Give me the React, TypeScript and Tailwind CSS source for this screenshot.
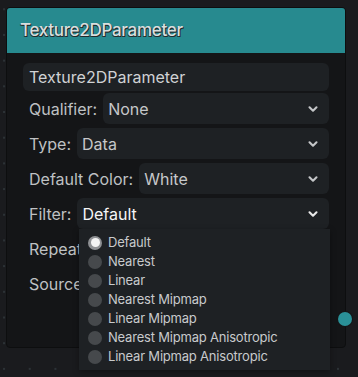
import React from 'react';
import { ChevronDown } from 'lucide-react';

const FILTERS = [
  'Default',
  'Nearest',
  'Linear',
  'Nearest Mipmap',
  'Linear Mipmap',
  'Nearest Mipmap Anisotropic',
  'Linear Mipmap Anisotropic',
];

const SelectRow = ({ label, value, active }: { label: string; value: string; active?: boolean }) => (
  <div className="flex items-center h-[31px] gap-[6px] pl-[6px]">
    <span className="text-[16px] text-[#bfc1c3] whitespace-nowrap">{label}</span>
    <div className="flex-1 h-full flex items-center justify-between rounded-[6px] bg-[#1e2124] pl-[5px] pr-[9px]">
      <span className={active ? 'text-[16px] text-[#f6f6f6]' : 'text-[16px] text-[#c6c8ca]'}>{value}</span>
      <ChevronDown size={14} strokeWidth={3.6} className={active ? 'text-[#e8e8e8]' : 'text-[#c4c6c8]'} />
    </div>
  </div>
);

const App: React.FC = () => {
  return (
    <div className="w-[358px] h-[377px] overflow-hidden bg-[#1a1b1e] bg-[radial-gradient(circle,#2c3236_1px,transparent_1.2px)] bg-[length:25.7px_25.7px] bg-[position:-8.8px_-3.6px] pt-[7px] pl-[6px] font-['Inter',sans-serif]">
      <div className="relative w-[340px] h-[341px] rounded-[4px] border border-[#0d0e0f] bg-[#141517]">
        {/* header */}
        <div className="h-[45px] rounded-t-[3px] bg-[#278a8f] flex items-center pl-[13px]">
          <span className="text-[17px] font-medium text-[#d8dede] [text-shadow:1px_1px_0_#1f2a2b,-0.5px_0.5px_0_#2b3a3b] tracking-[-0.3px]">
            Texture2DParameter
          </span>
        </div>

        {/* body */}
        <div className="pl-[16px] pr-[16px] pt-[10px] flex flex-col">
          <div className="h-[28px] rounded-[6px] bg-[#1e2124] flex items-center pl-[6px]">
            <span className="text-[16px] text-[#d0d2d4]">Texture2DParameter</span>
          </div>
          <div className="mt-[2px] flex flex-col gap-[4px]">
            <SelectRow label="Qualifier:" value="None" />
            <SelectRow label="Type:" value="Data" />
            <SelectRow label="Default Color:" value="White" />
            <SelectRow label="Filter:" value="Default" active />
            <div className="h-[31px] flex items-center pl-[6px]">
              <span className="text-[16px] text-[#bfc1c3]">Repeat:</span>
            </div>
            <div className="h-[31px] flex items-center pl-[6px]">
              <span className="text-[16px] text-[#bfc1c3]">Source:</span>
            </div>
          </div>
        </div>

        {/* output port */}
        <div className="absolute right-[-8px] top-[303px] w-[16px] h-[16px] rounded-full bg-[#141517] flex items-center justify-center">
          <div className="w-[14px] h-[14px] rounded-full bg-[#2a9097]" />
        </div>

        {/* open dropdown */}
        <div className="absolute left-[72px] top-[221px] w-[251px] h-[141px] bg-[#1e2124] shadow-[0_2px_6px_rgba(0,0,0,0.35)] pt-[4px] flex flex-col">
          {FILTERS.map((f, i) => (
            <div key={f} className="h-[19px] flex items-center pl-[9px] gap-[6px]">
              {i === 0 ? (
                <div className="w-[14px] h-[14px] rounded-full bg-[#8f9194] flex items-center justify-center">
                  <div className="w-[9px] h-[9px] rounded-full bg-[#f4f4f4]" />
                </div>
              ) : (
                <div className="w-[14px] h-[14px] rounded-full bg-[#46494c]" />
              )}
              <span className="text-[13px] text-[#c8cacc] leading-none tracking-[-0.2px]">{f}</span>
            </div>
          ))}
        </div>
      </div>
    </div>
  );
};

export default App;
